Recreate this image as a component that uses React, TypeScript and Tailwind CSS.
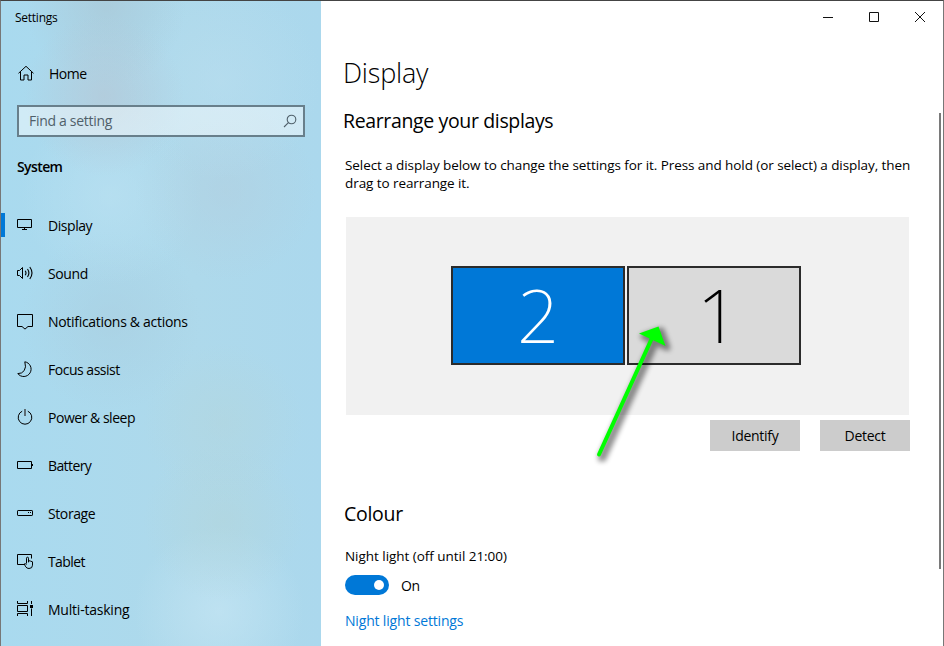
import type { ReactNode } from "react";

function Glyph({ children, size = 18 }: { children: ReactNode; size?: number }) {
  return (
    <svg width={size} height={size} viewBox={`0 0 ${size} ${size}`} fill="none" stroke="#000" strokeWidth="1" className="shrink-0">
      {children}
    </svg>
  );
}

const items: { label: string; track: string; icon: ReactNode }[] = [
  {
    label: "Display",
    track: "tracking-[-0.45px]",
    icon: (
      <Glyph>
        <path d="M1.5 3.5h14v8h-14zM8.5 11.5v2M6 13.5h5" />
      </Glyph>
    ),
  },
  {
    label: "Sound",
    track: "tracking-[-0.4px]",
    icon: (
      <Glyph>
        <path d="M1.5 6.5h2l3-3v11l-3-3h-2z" />
        <path d="M9.2 6.8q1.6 2.2 0 4.4M11.5 5q2.8 4 0 8M13.8 3q4.4 6 0 12" strokeWidth="1.1" />
      </Glyph>
    ),
  },
  {
    label: "Notifications & actions",
    track: "tracking-[-0.3px]",
    icon: (
      <Glyph>
        <path d="M1.5 2.5h15v12H12l-3 2.6-3-2.6H1.5z" />
      </Glyph>
    ),
  },
  {
    label: "Focus assist",
    track: "tracking-[-0.48px]",
    icon: (
      <Glyph>
        <path d="M8.8 1.8A7.4 7.4 0 1 1 1.8 13.6Q6 13.8 8.2 10.6 10.5 7.3 8.8 1.8z" />
      </Glyph>
    ),
  },
  {
    label: "Power & sleep",
    track: "tracking-[-0.48px]",
    icon: (
      <Glyph>
        <path d="M6.2 3.2a6.8 6.8 0 1 0 5.6 0" />
        <path d="M9 1v7" strokeWidth="1.3" stroke="#333" />
      </Glyph>
    ),
  },
  {
    label: "Battery",
    track: "tracking-[-0.6px]",
    icon: (
      <Glyph>
        <path d="M1.5 5.5h14v7h-14zM16.5 8v2" />
      </Glyph>
    ),
  },
  {
    label: "Storage",
    track: "tracking-[-0.4px]",
    icon: (
      <Glyph>
        <rect x="1.5" y="6.5" width="15" height="5" rx="0.6" />
        <path d="M12 8.5h1M14 8.5h1" />
      </Glyph>
    ),
  },
  {
    label: "Tablet",
    track: "tracking-[-0.6px]",
    icon: (
      <Glyph>
        <path d="M8 12.5H1.5v-10h14v4" />
        <path d="M10.5 11.5V6.2a1 1 0 0 1 2 0v4-1.6l2 .5 2 .7v3.4q0 3.3-3.5 3.3-2.3-.1-3.2-1.6L8.2 12q.8-1 2.3.5" />
      </Glyph>
    ),
  },
  {
    label: "Multi-tasking",
    track: "tracking-[-0.22px]",
    icon: (
      <Glyph>
        <path d="M1.5 1v2.5h10V1M1.5 5.5h10v6h-10zM1.5 16v-2.5h10V16M15.5 1v3M15.5 8.5V16" />
        <rect x="14" y="5" width="3" height="3" fill="#000" stroke="none" />
      </Glyph>
    ),
  },
];

function Sidebar() {
  return (
    <aside className="flex w-[320px] shrink-0 flex-col bg-[radial-gradient(circle_80px_at_103px_95px,#b8c2cf88_0%,#b8c2cf44_50%,transparent_100%),radial-gradient(circle_80px_at_105px_5px,#aac2cf88_0%,transparent_100%),radial-gradient(circle_100px_at_220px_80px,#bcdff077_0%,transparent_100%),radial-gradient(circle_90px_at_225px_190px,#b3cddd77_0%,transparent_100%),radial-gradient(circle_90px_at_110px_195px,#bee3f388_0%,transparent_100%),radial-gradient(circle_90px_at_110px_320px,#a9cbdc77_0%,transparent_100%),radial-gradient(circle_80px_at_222px_422px,#b4d5da77_0%,transparent_100%),radial-gradient(circle_80px_at_222px_520px,#b4d5d988_0%,transparent_100%),radial-gradient(circle_85px_at_218px_610px,#c6e6f4aa_0%,transparent_100%),linear-gradient(90deg,#a9daef_0%,#aed9eb_60%,#abd8ed_100%)]">
      <div className="h-[48px] pt-[9px] pl-[14px] text-[12px] leading-4 tracking-[-0.25px]">Settings</div>
      <div className="flex h-12 items-center pl-4">
        <Glyph size={18}>
          <path d="M1.5 9.3 9 2.3l7.5 7M3.5 8v8H7v-5h4v5h3.5V8" />
        </Glyph>
        <span className="ml-[14px] text-[14px] tracking-[-0.5px]">Home</span>
      </div>
      <div className="mt-[8px] ml-4 flex h-8 w-[288px] items-center justify-between border-2 border-[#687f8b] bg-white/45 pr-[6px] pl-[10px]">
        <span className="pb-[2px] text-[14px] tracking-[-0.3px] text-[#50606a]">Find a setting</span>
        <svg width="14" height="14" viewBox="0 0 14 14" fill="none" stroke="#50606a" strokeWidth="1.1">
          <circle cx="8.5" cy="5.5" r="4.3" />
          <path d="M5.4 8.6 1 13" />
        </svg>
      </div>
      <div className="mt-[20px] pl-4 text-[14px] leading-5 font-semibold tracking-[-0.6px]">System</div>
      <nav className="mt-[24px] flex flex-col">
        {items.map((item, i) => (
          <div key={item.label} className="flex h-12 items-center">
            <div className={i === 0 ? "h-6 w-1 bg-[#0078d7]" : "h-6 w-1"} />
            <div className="mb-px ml-[11px] flex">{item.icon}</div>
            <span className={`ml-[14px] text-[14px] whitespace-nowrap ${item.track}`}>{item.label}</span>
          </div>
        ))}
      </nav>
    </aside>
  );
}

function Caption() {
  return (
    <div className="flex h-[32px] justify-end">
      <div className="flex w-[46px] items-center justify-center">
        <svg width="10" height="11" stroke="#111" fill="none"><path d="M0 5.5h10" /></svg>
      </div>
      <div className="flex w-[46px] items-center justify-center">
        <svg width="10" height="10" stroke="#111" fill="none"><path d="M.5.5h9v9h-9z" /></svg>
      </div>
      <div className="flex w-[46px] items-center justify-center">
        <svg width="10" height="10" stroke="#111" fill="none"><path d="M0 0l10 10M10 0 0 10" /></svg>
      </div>
    </div>
  );
}

function Arrow() {
  return (
    <svg width="100" height="160" viewBox="580 310 100 160" className="absolute top-[310px] left-[580px]">
      <defs>
        <filter id="shade" x="-50%" y="-30%" width="200%" height="160%">
          <feMorphology in="SourceAlpha" operator="dilate" radius="1.5" result="fat" />
          <feGaussianBlur in="fat" stdDeviation="2.7" result="soft" />
          <feOffset in="soft" dx="3" dy="3" result="moved" />
          <feComponentTransfer in="moved">
            <feFuncA type="linear" slope="0.43" />
          </feComponentTransfer>
        </filter>
      </defs>
      <g filter="url(#shade)" fill="#000">
        <path d="M599 454.5 652 338" stroke="#000" strokeWidth="4" strokeLinecap="round" />
        <path d="M658.5 326.5 665.5 346 639 333.5z" />
      </g>
      <g fill="#00ff00">
        <path d="M599 454.5 652 338" stroke="#00ff00" strokeWidth="4" strokeLinecap="round" />
        <path d="M658.5 326.5 665.5 346 639 333.5z" />
      </g>
    </svg>
  );
}

function Main() {
  return (
    <main className="flex min-w-0 flex-1 flex-col bg-white">
      <Caption />
      <div className="flex flex-col pl-[24px]">
        <h1 className="mt-[20px] -ml-[2px] text-[27px] leading-10 font-[350] tracking-[-0.2px]">Display</h1>
        <h2 className="mt-[14px] -ml-[2px] text-[19.5px] leading-7 tracking-[-0.36px]">Rearrange your displays</h2>
        <p className="mt-[21px] text-[13.5px] leading-[18px] tracking-[-0.075px] whitespace-nowrap">
          Select a display below to change the settings for it. Press and hold (or select) a display, then
          <br />
          drag to rearrange it.
        </p>
        <div className="mt-[25px] ml-px flex h-[198px] w-[563px] items-start justify-center gap-[2px] bg-[#f1f1f1] pt-[49px] pr-[3px]">
          <div className="flex h-[99px] w-[174px] items-center justify-center border-2 border-[#2b2b2b] bg-[#0078d7] pb-[2px] font-['Noto_Sans',sans-serif] text-[74px] leading-none font-extralight text-white">
            2
          </div>
          <div className="flex h-[99px] w-[174px] items-center justify-center border-2 border-[#2b2b2b] bg-[#dadada] pb-[2px] pl-[8px] font-['Noto_Sans',sans-serif] text-[74px] leading-none font-extralight">
            1
          </div>
        </div>
        <div className="mt-[5px] flex w-[565px] justify-end gap-5">
          <button className="h-[31px] w-[90px] bg-[#ccc] text-[14px] tracking-[-0.3px]">Identify</button>
          <button className="h-[31px] w-[90px] bg-[#ccc] text-[14px] tracking-[-0.3px]">Detect</button>
        </div>
        <h2 className="mt-[49px] -ml-px text-[19.5px] leading-7 tracking-[-0.3px]">Colour</h2>
        <p className="mt-[18px] text-[13.5px] leading-5 tracking-[-0.04px]">Night light (off until 21:00)</p>
        <div className="mt-[9px] flex h-5 items-center">
          <div className="flex h-5 w-11 items-center justify-end rounded-full bg-[#0078d7] pr-[5px]">
            <div className="size-[10px] rounded-full bg-white" />
          </div>
          <span className="ml-3 text-[14px] tracking-[-0.3px]">On</span>
        </div>
        <a className="mt-[16px] text-[14px] leading-5 tracking-[-0.17px] text-[#0078d7]">Night light settings</a>
      </div>
    </main>
  );
}

export default function App() {
  return (
    <div className="relative flex h-[646px] w-[944px] overflow-hidden border-t border-r border-l border-t-[#444] border-r-[#777] border-l-[#777] bg-white font-['Open_Sans','Noto_Sans',sans-serif] text-black">
      <Sidebar />
      <Main />
      <div className="absolute top-[112px] right-[2px] h-[456px] w-[2px] bg-[#7a7a7a]" />
      <div className="absolute -top-px -left-px">
        <Arrow />
      </div>
    </div>
  );
}
